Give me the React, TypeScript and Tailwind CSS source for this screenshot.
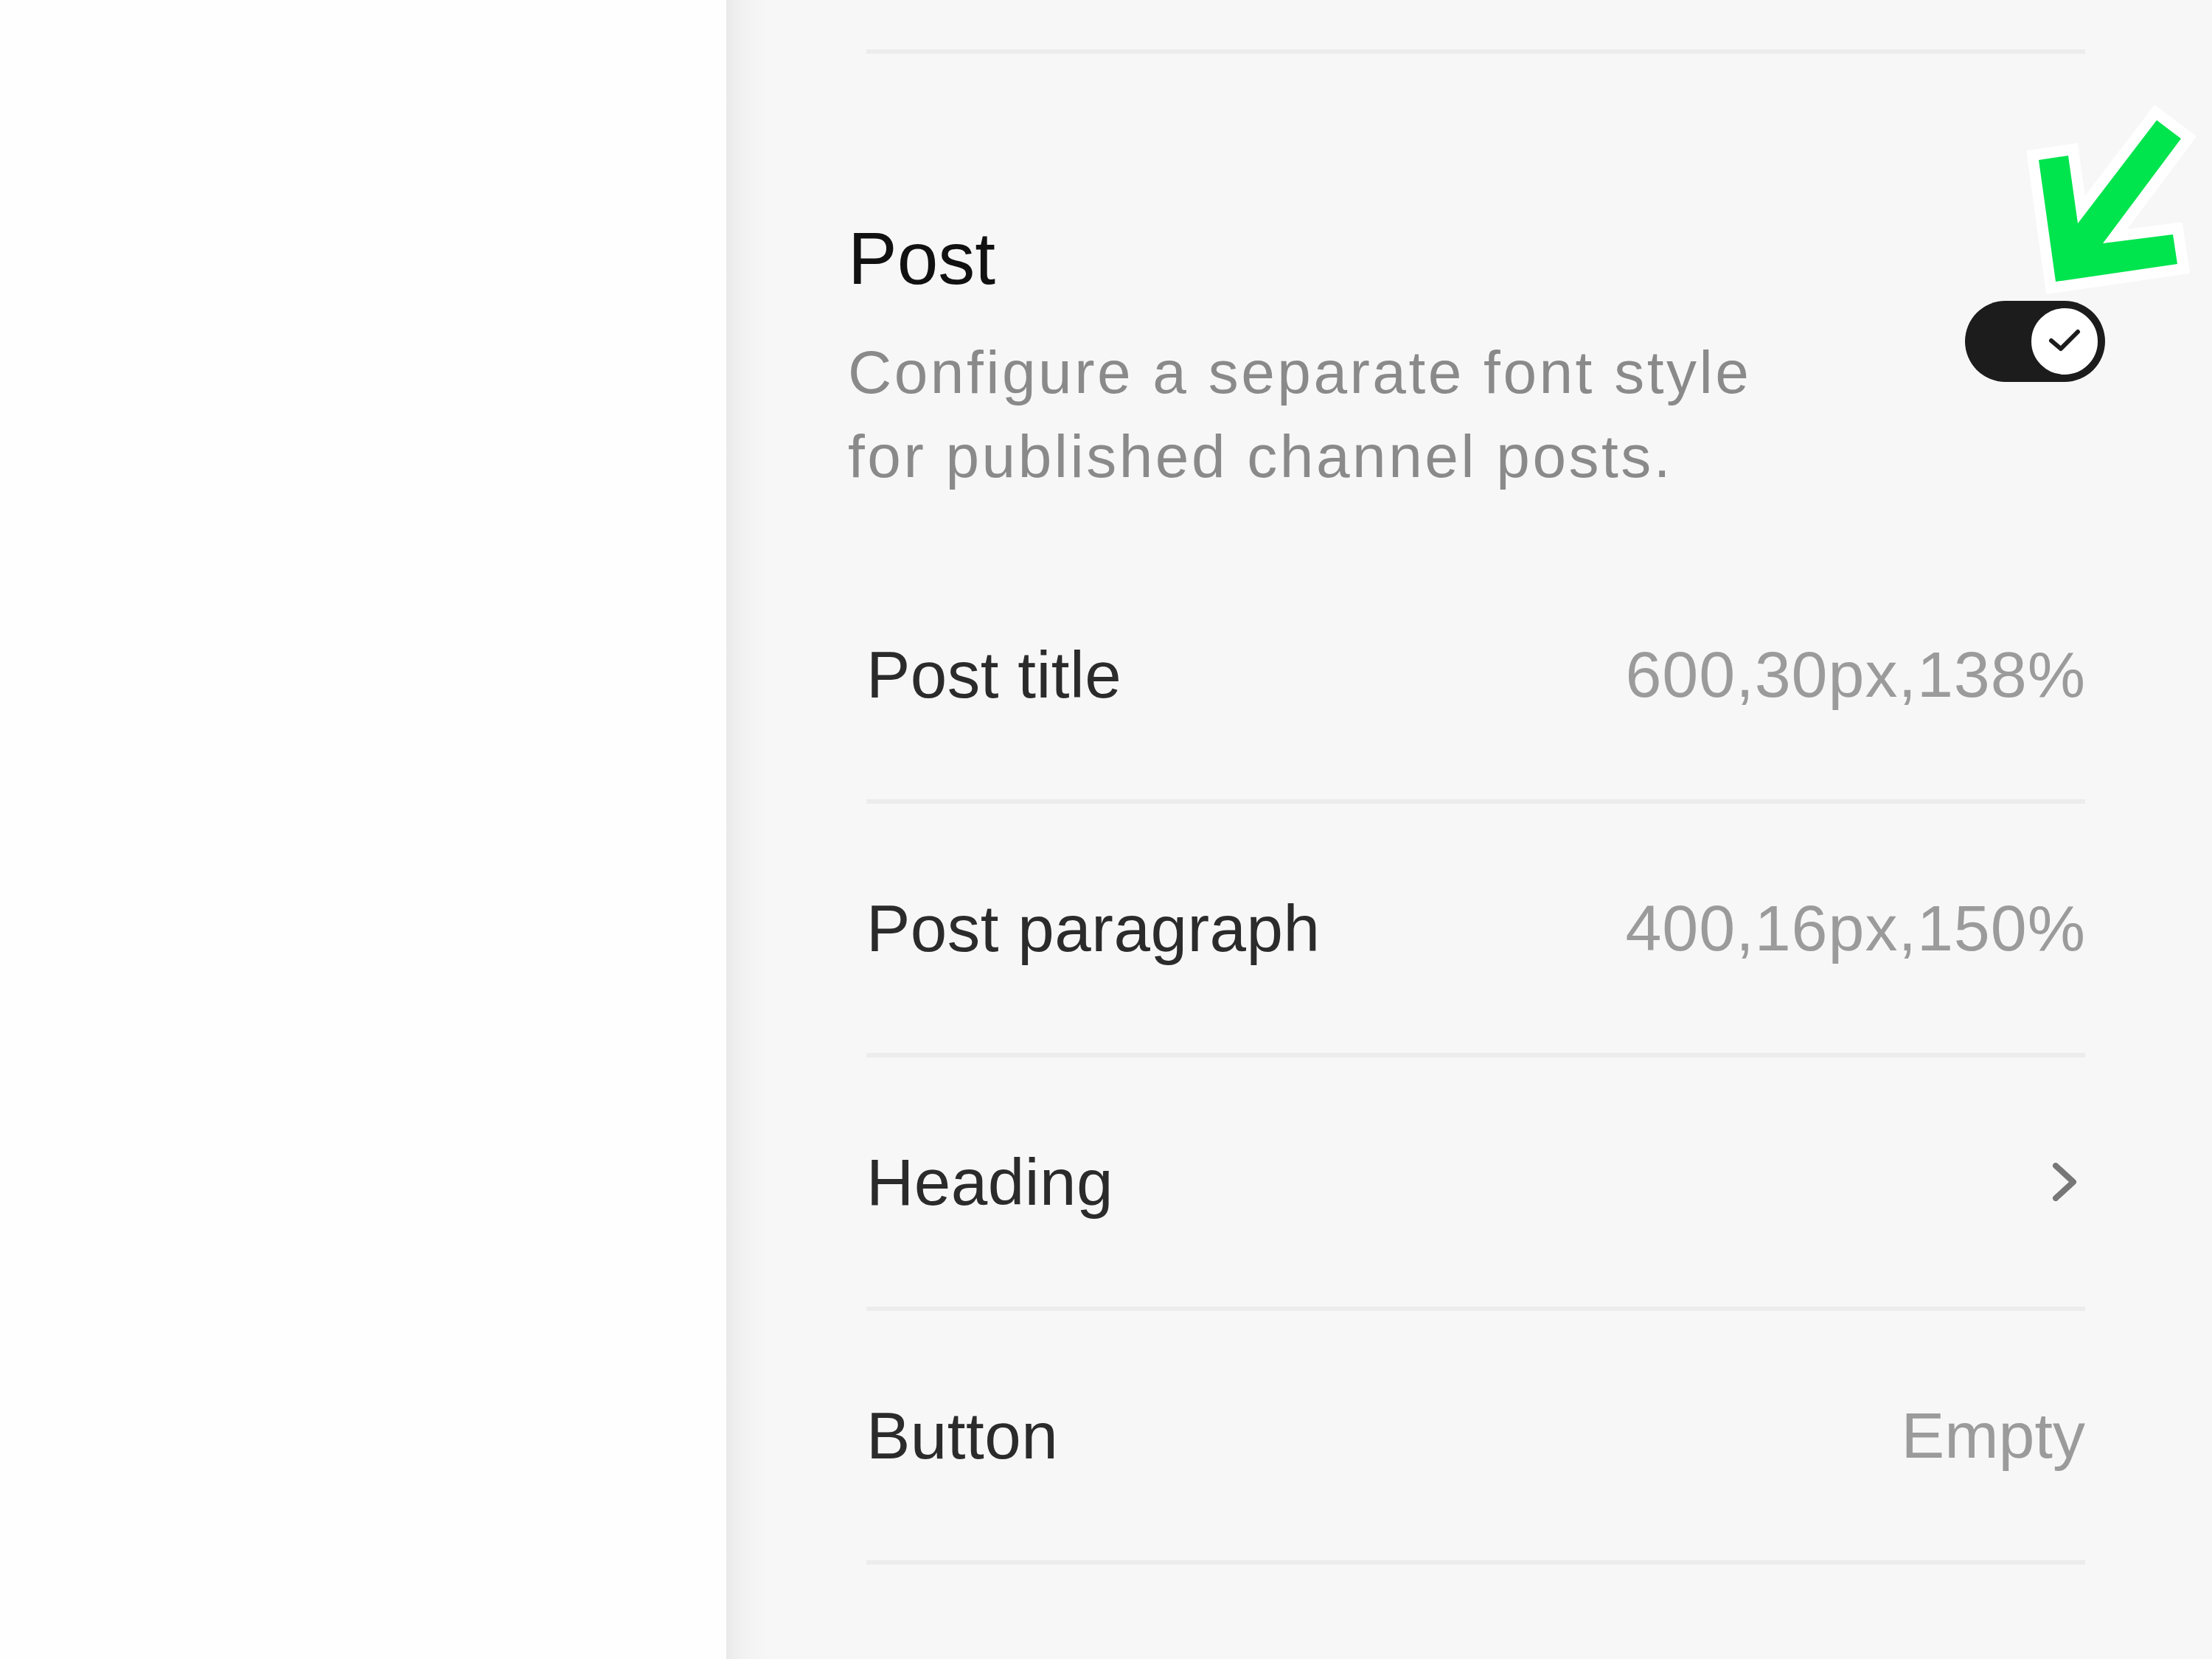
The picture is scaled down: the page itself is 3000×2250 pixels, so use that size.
import React from "react";

// One settings row in the font panel
interface RowProps {
  label: string;
  value?: string;
  numeric?: boolean;
  chevron?: boolean;
}

const SettingRow: React.FC<RowProps> = ({ label, value, numeric, chevron }) => {
  return (
    <div className="flex h-[344px] items-center justify-between border-b-[6px] border-[#ececec]">
      <span className="text-[89px] leading-none tracking-[0.5px] text-[#2b2b2b]">{label}</span>
      {chevron ? (
        <svg
          className="mr-[11px] h-[52px] w-[34px]"
          viewBox="0 0 34 52"
          fill="none"
          stroke="#777777"
          strokeWidth="8"
          strokeLinecap="round"
          strokeLinejoin="round"
        >
          <path d="M5 4 L29 26 L5 48" />
        </svg>
      ) : numeric ? (
        <span className="mr-[-1px] text-[88px] leading-none tracking-[1px] text-[#9b9b9b]">
          {value}
        </span>
      ) : (
        <span className="text-[88px] leading-none text-[#9b9b9b]">{value}</span>
      )}
    </div>
  );
};

// Toggle switch in the "on" state
const Toggle: React.FC = () => {
  return (
    <div className="mt-[118px] flex h-[110px] w-[190px] items-center justify-end rounded-full bg-[#1c1c1c] p-[5px]">
      <div className="flex h-[100px] w-[100px] items-center justify-center rounded-full border-[5px] border-[#1c1c1c] bg-white">
        <svg
          className="h-[40px] w-[48px]"
          viewBox="0 0 48 40"
          fill="none"
          stroke="#1c1c1c"
          strokeWidth="6"
          strokeLinecap="round"
          strokeLinejoin="round"
        >
          <path d="M6 19 L19 30 L42 7" />
        </svg>
      </div>
    </div>
  );
};

const App: React.FC = () => {
  return (
    <div className="relative flex h-[2250px] w-[3000px] overflow-hidden font-['Liberation_Sans',Arial,sans-serif]">
      {/* empty left side */}
      <div className="w-[985px] bg-[#fefefe]" />

      {/* settings panel */}
      <div className="flex-1 bg-[linear-gradient(to_right,#e9e9e9_0px,#efefef_12px,#f4f4f4_35px,#f7f7f7_60px)] pl-[190px] pr-[172px]">
        <div className="h-[73px] border-b-[6px] border-[#ececec]" />

        {/* Post header */}
        <div className="-ml-[25px] -mr-[27px] mt-[217px] flex items-start justify-between">
          <div>
            <h2 className="text-[100px] leading-[120px] text-[#111111]">Post</h2>
            <p className="mt-[38px] max-w-[1320px] text-[82px] leading-[114px] tracking-[3.5px] text-[#8a8a8a]">
              Configure a separate font style for published channel posts.
            </p>
          </div>
          <Toggle />
        </div>

        <div className="mt-[70px]">
          <SettingRow label="Post title" value="600,30px,138%" numeric />
          <SettingRow label="Post paragraph" value="400,16px,150%" numeric />
          <SettingRow label="Heading" chevron />
          <SettingRow label="Button" value="Empty" />
        </div>
      </div>

      {/* green annotation arrow */}
      <svg
        className="absolute left-[2740px] top-[140px] h-[260px] w-[240px] overflow-visible"
        viewBox="0 0 240 260"
      >
        <polygon
          points="25,77 65,71 78,163 185,23 218,48 112,190 207,178 213,218 48,242"
          fill="#00e44e"
          stroke="#ffffff"
          strokeWidth="30"
          strokeLinejoin="miter"
          paintOrder="stroke"
        />
      </svg>
    </div>
  );
};

export default App;
